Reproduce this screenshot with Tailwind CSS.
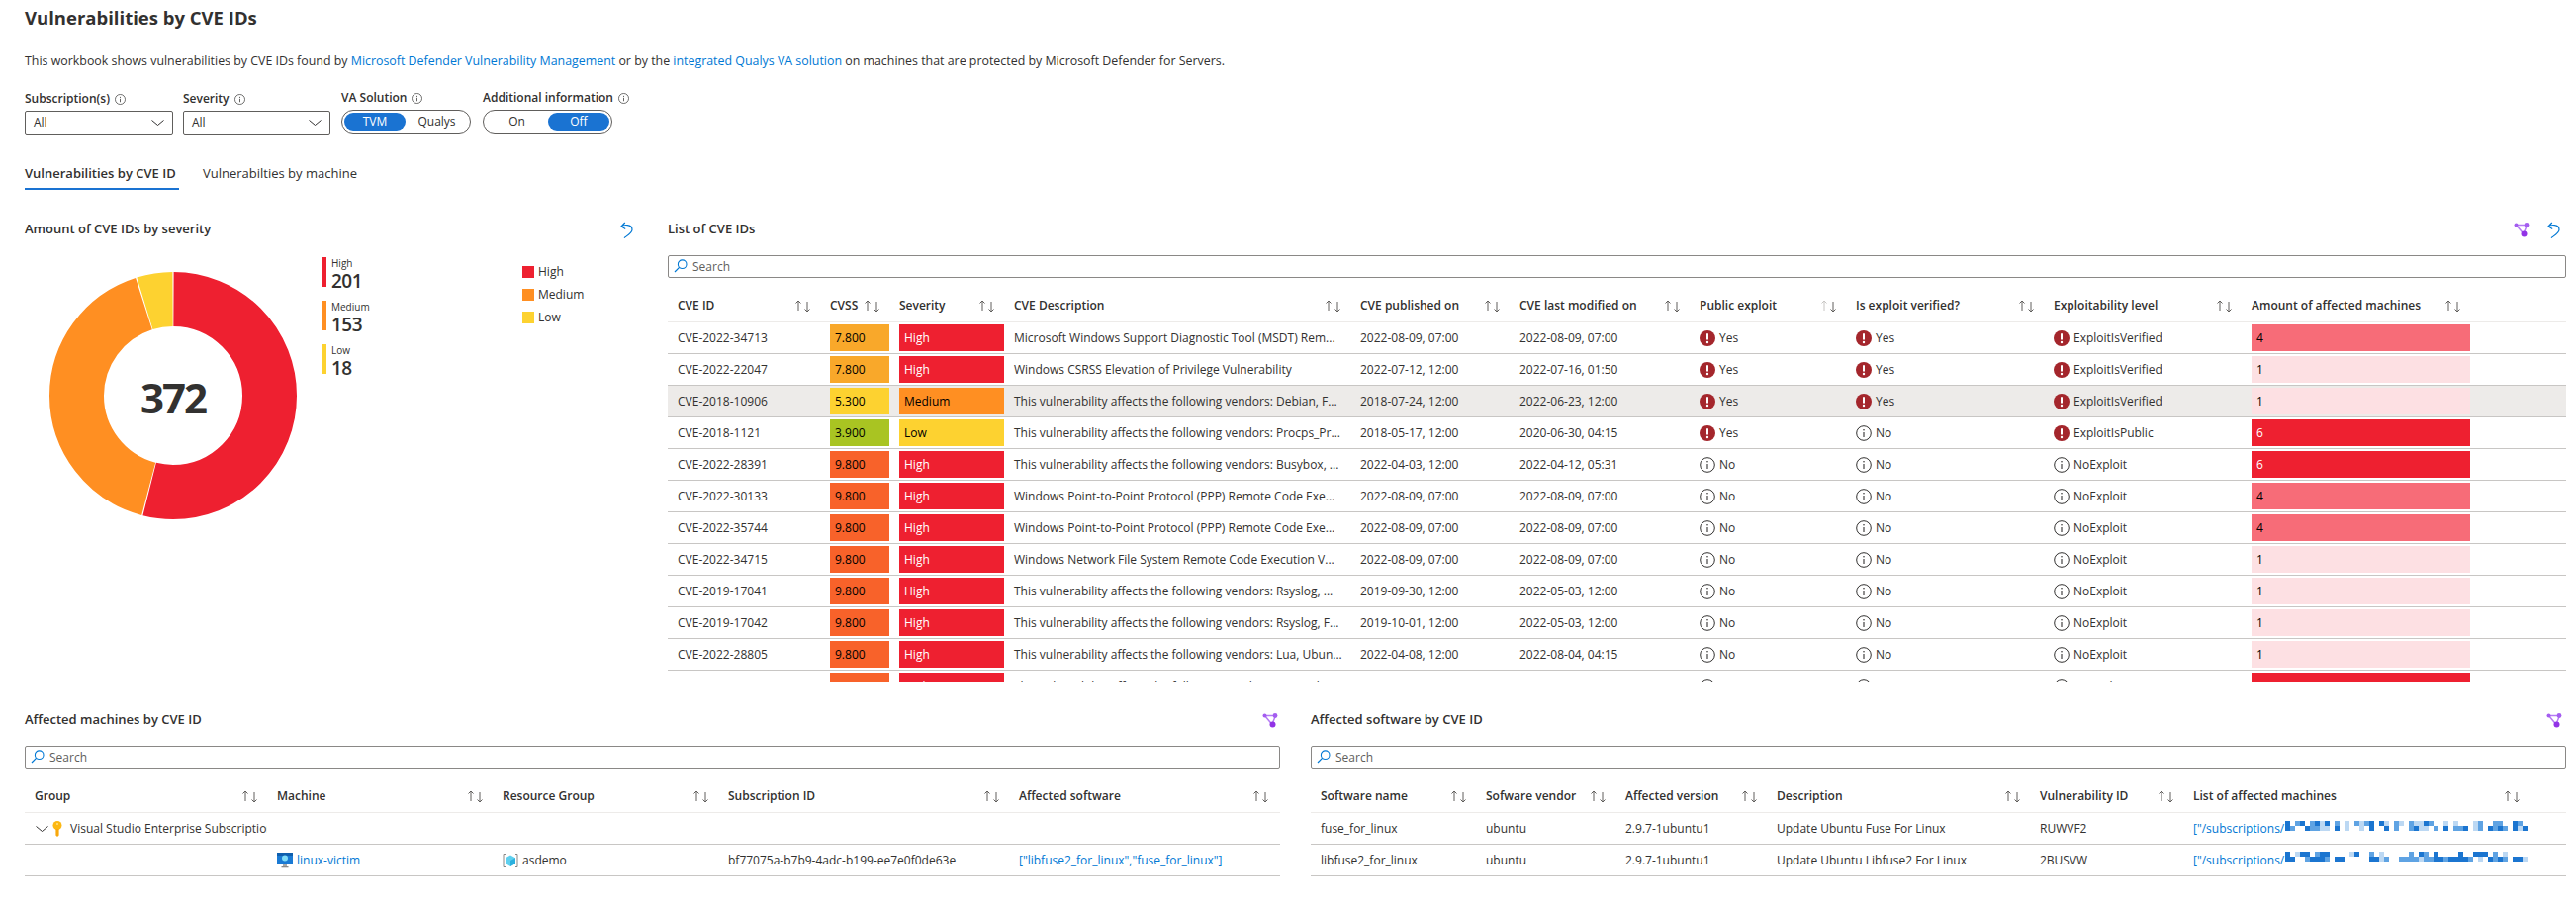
<!DOCTYPE html>
<html><head><meta charset="utf-8"><title>Vulnerabilities by CVE IDs</title>
<script src="https://cdn.jsdelivr.net/npm/@tailwindcss/browser@4"></script></head>
<body class="bg-white">
<svg class="absolute w-0 h-0">
<symbol id="sort" viewBox="0 0 17 14"><path d="M3 12V2M.5 4.500 3 2l2.500 2.500M12 3v10M9.500 10.500 12 13l2.500-2.500" fill="none" stroke="#605e5c" stroke-width="1"/></symbol>
<symbol id="sortd" viewBox="0 0 17 14"><path d="M3 12V2M.5 4.500 3 2l2.500 2.500" fill="none" stroke="#c8c6c4" stroke-width="1"/><path d="M12 3v10M9.500 10.500 12 13l2.500-2.500" fill="none" stroke="#605e5c" stroke-width="1"/></symbol>
<symbol id="info" viewBox="0 0 16 16"><circle cx="8" cy="8" r="7.3" fill="none" stroke="#323130" stroke-width="1"/><path d="M8 7v5" stroke="#323130" stroke-width="1.1"/><circle cx="8" cy="4.8" r=".8" fill="#323130"/></symbol>
<symbol id="err" viewBox="0 0 16 16"><circle cx="8" cy="8" r="8" fill="#a4262c"/><path d="M8 3.2v6.4" stroke="#fff" stroke-width="2"/><circle cx="8" cy="12" r="1.2" fill="#fff"/></symbol>
<symbol id="search" viewBox="0 0 14 14"><circle cx="8.7" cy="5.2" r="4.3" fill="none" stroke="#0078d4" stroke-width="1.1"/><path d="M5.6 8.3 1 13" stroke="#0078d4" stroke-width="1.2"/></symbol>
<symbol id="share" viewBox="0 0 16 16"><path d="M2.5 3.500h11M2.500 3.500l7.500 9M13.500 3.500 10 12" stroke="#b57bf5" stroke-width="1.5" fill="none"/><circle cx="2.5" cy="3.5" r="2" fill="#a45df0"/><circle cx="13" cy="3.5" r="2.4" fill="#a45df0"/><circle cx="10.5" cy="12.5" r="3" fill="#9233e6"/></symbol>
<symbol id="undo" viewBox="0 0 13 17"><path d="M4.800 1 1 5l4.200 2.600M1 5c2-1.800 11-3 11 3.200 0 2.800-3.600 5-8 8.400" fill="none" stroke="#0078d4" stroke-width="1.2"/></symbol>
<symbol id="chev" viewBox="0 0 13 6"><path d="M.5.5l6 5 6-5" fill="none" stroke="#323130" stroke-width="1"/></symbol>
</svg>

<div class="relative w-[2604px] h-[919px] overflow-hidden bg-white text-[#323130] text-[12px] font-['Open_Sans','Noto_Sans',sans-serif] pl-[25px] pr-[10px]">

<h1 class="h-[36px] flex items-center text-[18.5px] font-bold leading-none whitespace-nowrap">Vulnerabilities by CVE IDs</h1>
<p class="mt-[17px] h-[18px] text-[12.4px] leading-[18px] whitespace-nowrap">This workbook shows vulnerabilities by CVE IDs found by <a class="text-[#0078d4]">Microsoft Defender Vulnerability Management</a> or by the <a class="text-[#0078d4]">integrated Qualys VA solution</a> on machines that are protected by Microsoft Defender for Servers.</p>

<div class="mt-[21px] flex h-[44px]">
  <div class="w-[150px] mr-[10px]">
    <div class="h-[16px] mb-[4px] flex items-center gap-[5px] font-semibold"><span>Subscription(s)</span><svg class="w-[11px] h-[11px] shrink-0"><use href="#info"/></svg></div>
    <div class="h-[24px] border border-[#605e5c] rounded-[2px] flex items-center justify-between pl-[8px] pr-[8px]"><span>All</span><svg class="w-[13px] h-[6px]"><use href="#chev"/></svg></div>
  </div>
  <div class="w-[149px] mr-[11px]">
    <div class="h-[16px] mb-[4px] flex items-center gap-[5px] font-semibold"><span>Severity</span><svg class="w-[11px] h-[11px] shrink-0"><use href="#info"/></svg></div>
    <div class="h-[24px] border border-[#605e5c] rounded-[2px] flex items-center justify-between pl-[8px] pr-[8px]"><span>All</span><svg class="w-[13px] h-[6px]"><use href="#chev"/></svg></div>
  </div>
  <div class="w-[131px] mr-[12px]">
    <div class="h-[14px] mb-[5px] flex items-center gap-[5px] font-semibold"><span>VA Solution</span><svg class="w-[11px] h-[11px] shrink-0"><use href="#info"/></svg></div>
    <div class="h-[24px] border border-[#605e5c] rounded-full flex items-center px-[2px] text-center">
      <span class="w-[62px] h-[18px] rounded-full bg-[#1a73d2] text-white leading-[18px]">TVM</span><span class="flex-1">Qualys</span>
    </div>
  </div>
  <div class="w-[131px]">
    <div class="h-[14px] mb-[5px] flex items-center gap-[5px] font-semibold whitespace-nowrap"><span class="shrink-0">Additional information</span><svg class="w-[11px] h-[11px] shrink-0"><use href="#info"/></svg></div>
    <div class="h-[24px] border border-[#605e5c] rounded-full flex items-center px-[2px] text-center">
      <span class="flex-1">On</span><span class="w-[62px] h-[18px] rounded-full bg-[#1a73d2] text-white leading-[18px]">Off</span>
    </div>
  </div>
</div>

<div class="mt-[27px] flex h-[29px] gap-[24px] text-[13px]">
  <div class="font-semibold border-b-2 border-[#1a73d2] w-[156px] h-[29px] leading-[24px] whitespace-nowrap">Vulnerabilities by CVE ID</div>
  <div class="leading-[24px] whitespace-nowrap">Vulnerabilties by machine</div>
</div>

<div class="mt-[30px] flex gap-[35px] h-[468px]">
  <section class="w-[615px] shrink-0">
    <div class="h-[20px] flex items-center justify-between">
      <h2 class="text-[13px] font-semibold">Amount of CVE IDs by severity</h2>
      <svg class="w-[13px] h-[17px]"><use href="#undo"/></svg>
    </div>
    <div class="flex items-start">
      <div class="relative ml-[25px] mt-[33px] w-[250px] h-[250px]">
        <svg class="w-[250px] h-[250px] -rotate-90" viewBox="0 0 250 250">
          <circle cx="125" cy="125" r="97.5" fill="none" stroke="#ee2030" stroke-width="55" pathLength="372" stroke-dasharray="200.4 171.6" stroke-dashoffset="-0.3"/>
          <circle cx="125" cy="125" r="97.5" fill="none" stroke="#ff8f22" stroke-width="55" pathLength="372" stroke-dasharray="152.4 219.6" stroke-dashoffset="-201.3"/>
          <circle cx="125" cy="125" r="97.5" fill="none" stroke="#fdd230" stroke-width="55" pathLength="372" stroke-dasharray="17.4 354.6" stroke-dashoffset="-354.3"/>
        </svg>
        <div class="absolute inset-0 flex items-center justify-center pt-[4px] text-[42px] font-bold leading-none tracking-[-2px]">372</div>
      </div>
      <div class="ml-[25px] mt-[18px] w-[203px] flex flex-col gap-[14px]">
        <div class="flex gap-[5px] h-[30px]"><div class="w-[5px] h-[30px] bg-[#ee2030]"></div><div><div class="text-[10px] leading-[12px]">High</div><div class="mt-[2px] text-[19px] leading-[20px] font-semibold tracking-[-0.5px]">201</div></div></div>
        <div class="flex gap-[5px] h-[30px]"><div class="w-[5px] h-[30px] bg-[#ff8f22]"></div><div><div class="text-[10px] leading-[12px]">Medium</div><div class="mt-[2px] text-[19px] leading-[20px] font-semibold tracking-[-0.5px]">153</div></div></div>
        <div class="flex gap-[5px] h-[30px]"><div class="w-[5px] h-[30px] bg-[#fdd230]"></div><div><div class="text-[10px] leading-[12px]">Low</div><div class="mt-[2px] text-[19px] leading-[20px] font-semibold tracking-[-0.5px]">18</div></div></div>
      </div>
      <div class="mt-[27px] flex flex-col gap-[11px]">
        <div class="flex items-center gap-[4px] h-[12px]"><div class="w-[12px] h-[12px] bg-[#ee2030]"></div><span>High</span></div>
        <div class="flex items-center gap-[4px] h-[12px]"><div class="w-[12px] h-[12px] bg-[#ff8f22]"></div><span>Medium</span></div>
        <div class="flex items-center gap-[4px] h-[12px]"><div class="w-[12px] h-[12px] bg-[#fdd230]"></div><span>Low</span></div>
      </div>
    </div>
  </section>

  <section class="w-[1919px] shrink-0 h-[468px]">
    <div class="h-[20px] flex items-center justify-between pr-[6px]">
      <h2 class="text-[13px] font-semibold">List of CVE IDs</h2>
      <div class="flex items-center gap-[18px]"><svg class="w-[16px] h-[16px]"><use href="#share"/></svg><svg class="w-[13px] h-[17px]"><use href="#undo"/></svg></div>
    </div>
    <div class="mt-[16px] h-[23px] border border-[#8a8886] rounded-[2px] flex items-center gap-[5px] pl-[5px] text-[#605e5c]"><svg class="w-[14px] h-[14px] -mt-[2px]"><use href="#search"/></svg><span>Search</span></div>
    <div class="mt-[11px] h-[398px] overflow-hidden">
    <table class="w-full table-fixed border-separate border-spacing-0 whitespace-nowrap [&_th]:h-[34px] [&_th]:p-0 [&_th]:font-semibold [&_th]:text-left [&_th]:border-b [&_th]:border-[#edebe9] [&_td]:h-[32px] [&_td]:p-0 [&_td]:pl-[10px] [&_td]:border-b [&_td]:border-[#c8c6c4] [&_td]:overflow-hidden">
      <colgroup><col class="w-[154px]"><col class="w-[70px]"><col class="w-[116px]"><col class="w-[350px]"><col class="w-[161px]"><col class="w-[182px]"><col class="w-[158px]"><col class="w-[200px]"><col class="w-[200px]"><col class="w-[328px]"></colgroup>
      <thead><tr>
        <th><div class="flex items-center justify-between pl-[10px] pr-[8px]"><span>CVE ID</span><svg class="w-[17px] h-[14px]"><use href="#sort"/></svg></div></th>
        <th><div class="flex items-center justify-between pl-[10px] pr-[8px]"><span>CVSS</span><svg class="w-[17px] h-[14px]"><use href="#sort"/></svg></div></th>
        <th><div class="flex items-center justify-between pl-[10px] pr-[8px]"><span>Severity</span><svg class="w-[17px] h-[14px]"><use href="#sort"/></svg></div></th>
        <th><div class="flex items-center justify-between pl-[10px] pr-[8px]"><span>CVE Description</span><svg class="w-[17px] h-[14px]"><use href="#sort"/></svg></div></th>
        <th><div class="flex items-center justify-between pl-[10px] pr-[8px]"><span>CVE published on</span><svg class="w-[17px] h-[14px]"><use href="#sort"/></svg></div></th>
        <th><div class="flex items-center justify-between pl-[10px] pr-[8px]"><span>CVE last modified on</span><svg class="w-[17px] h-[14px]"><use href="#sort"/></svg></div></th>
        <th><div class="flex items-center justify-between pl-[10px] pr-[8px]"><span>Public exploit</span><svg class="w-[17px] h-[14px]"><use href="#sortd"/></svg></div></th>
        <th><div class="flex items-center justify-between pl-[10px] pr-[8px]"><span>Is exploit verified?</span><svg class="w-[17px] h-[14px]"><use href="#sort"/></svg></div></th>
        <th><div class="flex items-center justify-between pl-[10px] pr-[8px]"><span>Exploitability level</span><svg class="w-[17px] h-[14px]"><use href="#sort"/></svg></div></th>
        <th><div class="flex items-center justify-between pl-[10px] pr-[105px]"><span>Amount of affected machines</span><svg class="w-[17px] h-[14px]"><use href="#sort"/></svg></div></th>
      </tr></thead>
      <tbody>
        <tr><td>CVE-2022-34713</td><td><div class="h-[27px] leading-[27px] px-[5px] bg-[#f9a82a] text-black">7.800</div></td><td><div class="h-[27px] leading-[27px] px-[5px] bg-[#ee2030] text-white">High</div></td><td>Microsoft Windows Support Diagnostic Tool (MSDT) Rem...</td><td>2022-08-09, 07:00</td><td>2022-08-09, 07:00</td>
          <td><div class="flex items-center gap-[4px]"><svg class="w-[16px] h-[16px]"><use href="#err"/></svg>Yes</div></td><td><div class="flex items-center gap-[4px]"><svg class="w-[16px] h-[16px]"><use href="#err"/></svg>Yes</div></td><td><div class="flex items-center gap-[4px]"><svg class="w-[16px] h-[16px]"><use href="#err"/></svg>ExploitIsVerified</div></td><td><div class="w-[221px] h-[27px] leading-[27px] px-[5px] bg-[#f76c78] text-black">4</div></td></tr>
        <tr><td>CVE-2022-22047</td><td><div class="h-[27px] leading-[27px] px-[5px] bg-[#f9a82a] text-black">7.800</div></td><td><div class="h-[27px] leading-[27px] px-[5px] bg-[#ee2030] text-white">High</div></td><td>Windows CSRSS Elevation of Privilege Vulnerability</td><td>2022-07-12, 12:00</td><td>2022-07-16, 01:50</td>
          <td><div class="flex items-center gap-[4px]"><svg class="w-[16px] h-[16px]"><use href="#err"/></svg>Yes</div></td><td><div class="flex items-center gap-[4px]"><svg class="w-[16px] h-[16px]"><use href="#err"/></svg>Yes</div></td><td><div class="flex items-center gap-[4px]"><svg class="w-[16px] h-[16px]"><use href="#err"/></svg>ExploitIsVerified</div></td><td><div class="w-[221px] h-[27px] leading-[27px] px-[5px] bg-[#fde0e3] text-black">1</div></td></tr>
        <tr class="bg-[#edebe9]"><td>CVE-2018-10906</td><td><div class="h-[27px] leading-[27px] px-[5px] bg-[#fdd230] text-black">5.300</div></td><td><div class="h-[27px] leading-[27px] px-[5px] bg-[#ff8f22] text-black">Medium</div></td><td>This vulnerability affects the following vendors: Debian, F...</td><td>2018-07-24, 12:00</td><td>2022-06-23, 12:00</td>
          <td><div class="flex items-center gap-[4px]"><svg class="w-[16px] h-[16px]"><use href="#err"/></svg>Yes</div></td><td><div class="flex items-center gap-[4px]"><svg class="w-[16px] h-[16px]"><use href="#err"/></svg>Yes</div></td><td><div class="flex items-center gap-[4px]"><svg class="w-[16px] h-[16px]"><use href="#err"/></svg>ExploitIsVerified</div></td><td><div class="w-[221px] h-[27px] leading-[27px] px-[5px] bg-[#fde0e3] text-black">1</div></td></tr>
        <tr><td>CVE-2018-1121</td><td><div class="h-[27px] leading-[27px] px-[5px] bg-[#a9c422] text-black">3.900</div></td><td><div class="h-[27px] leading-[27px] px-[5px] bg-[#fdd230] text-black">Low</div></td><td>This vulnerability affects the following vendors: Procps_Pr...</td><td>2018-05-17, 12:00</td><td>2020-06-30, 04:15</td>
          <td><div class="flex items-center gap-[4px]"><svg class="w-[16px] h-[16px]"><use href="#err"/></svg>Yes</div></td><td><div class="flex items-center gap-[4px]"><svg class="w-[16px] h-[16px]"><use href="#info"/></svg>No</div></td><td><div class="flex items-center gap-[4px]"><svg class="w-[16px] h-[16px]"><use href="#err"/></svg>ExploitIsPublic</div></td><td><div class="w-[221px] h-[27px] leading-[27px] px-[5px] bg-[#ee2030] text-white">6</div></td></tr>
        <tr><td>CVE-2022-28391</td><td><div class="h-[27px] leading-[27px] px-[5px] bg-[#f8622a] text-black">9.800</div></td><td><div class="h-[27px] leading-[27px] px-[5px] bg-[#ee2030] text-white">High</div></td><td>This vulnerability affects the following vendors: Busybox, ...</td><td>2022-04-03, 12:00</td><td>2022-04-12, 05:31</td>
          <td><div class="flex items-center gap-[4px]"><svg class="w-[16px] h-[16px]"><use href="#info"/></svg>No</div></td><td><div class="flex items-center gap-[4px]"><svg class="w-[16px] h-[16px]"><use href="#info"/></svg>No</div></td><td><div class="flex items-center gap-[4px]"><svg class="w-[16px] h-[16px]"><use href="#info"/></svg>NoExploit</div></td><td><div class="w-[221px] h-[27px] leading-[27px] px-[5px] bg-[#ee2030] text-white">6</div></td></tr>
        <tr><td>CVE-2022-30133</td><td><div class="h-[27px] leading-[27px] px-[5px] bg-[#f8622a] text-black">9.800</div></td><td><div class="h-[27px] leading-[27px] px-[5px] bg-[#ee2030] text-white">High</div></td><td>Windows Point-to-Point Protocol (PPP) Remote Code Exe...</td><td>2022-08-09, 07:00</td><td>2022-08-09, 07:00</td>
          <td><div class="flex items-center gap-[4px]"><svg class="w-[16px] h-[16px]"><use href="#info"/></svg>No</div></td><td><div class="flex items-center gap-[4px]"><svg class="w-[16px] h-[16px]"><use href="#info"/></svg>No</div></td><td><div class="flex items-center gap-[4px]"><svg class="w-[16px] h-[16px]"><use href="#info"/></svg>NoExploit</div></td><td><div class="w-[221px] h-[27px] leading-[27px] px-[5px] bg-[#f76c78] text-black">4</div></td></tr>
        <tr><td>CVE-2022-35744</td><td><div class="h-[27px] leading-[27px] px-[5px] bg-[#f8622a] text-black">9.800</div></td><td><div class="h-[27px] leading-[27px] px-[5px] bg-[#ee2030] text-white">High</div></td><td>Windows Point-to-Point Protocol (PPP) Remote Code Exe...</td><td>2022-08-09, 07:00</td><td>2022-08-09, 07:00</td>
          <td><div class="flex items-center gap-[4px]"><svg class="w-[16px] h-[16px]"><use href="#info"/></svg>No</div></td><td><div class="flex items-center gap-[4px]"><svg class="w-[16px] h-[16px]"><use href="#info"/></svg>No</div></td><td><div class="flex items-center gap-[4px]"><svg class="w-[16px] h-[16px]"><use href="#info"/></svg>NoExploit</div></td><td><div class="w-[221px] h-[27px] leading-[27px] px-[5px] bg-[#f76c78] text-black">4</div></td></tr>
        <tr><td>CVE-2022-34715</td><td><div class="h-[27px] leading-[27px] px-[5px] bg-[#f8622a] text-black">9.800</div></td><td><div class="h-[27px] leading-[27px] px-[5px] bg-[#ee2030] text-white">High</div></td><td>Windows Network File System Remote Code Execution V...</td><td>2022-08-09, 07:00</td><td>2022-08-09, 07:00</td>
          <td><div class="flex items-center gap-[4px]"><svg class="w-[16px] h-[16px]"><use href="#info"/></svg>No</div></td><td><div class="flex items-center gap-[4px]"><svg class="w-[16px] h-[16px]"><use href="#info"/></svg>No</div></td><td><div class="flex items-center gap-[4px]"><svg class="w-[16px] h-[16px]"><use href="#info"/></svg>NoExploit</div></td><td><div class="w-[221px] h-[27px] leading-[27px] px-[5px] bg-[#fde0e3] text-black">1</div></td></tr>
        <tr><td>CVE-2019-17041</td><td><div class="h-[27px] leading-[27px] px-[5px] bg-[#f8622a] text-black">9.800</div></td><td><div class="h-[27px] leading-[27px] px-[5px] bg-[#ee2030] text-white">High</div></td><td>This vulnerability affects the following vendors: Rsyslog, ...</td><td>2019-09-30, 12:00</td><td>2022-05-03, 12:00</td>
          <td><div class="flex items-center gap-[4px]"><svg class="w-[16px] h-[16px]"><use href="#info"/></svg>No</div></td><td><div class="flex items-center gap-[4px]"><svg class="w-[16px] h-[16px]"><use href="#info"/></svg>No</div></td><td><div class="flex items-center gap-[4px]"><svg class="w-[16px] h-[16px]"><use href="#info"/></svg>NoExploit</div></td><td><div class="w-[221px] h-[27px] leading-[27px] px-[5px] bg-[#fde0e3] text-black">1</div></td></tr>
        <tr><td>CVE-2019-17042</td><td><div class="h-[27px] leading-[27px] px-[5px] bg-[#f8622a] text-black">9.800</div></td><td><div class="h-[27px] leading-[27px] px-[5px] bg-[#ee2030] text-white">High</div></td><td>This vulnerability affects the following vendors: Rsyslog, F...</td><td>2019-10-01, 12:00</td><td>2022-05-03, 12:00</td>
          <td><div class="flex items-center gap-[4px]"><svg class="w-[16px] h-[16px]"><use href="#info"/></svg>No</div></td><td><div class="flex items-center gap-[4px]"><svg class="w-[16px] h-[16px]"><use href="#info"/></svg>No</div></td><td><div class="flex items-center gap-[4px]"><svg class="w-[16px] h-[16px]"><use href="#info"/></svg>NoExploit</div></td><td><div class="w-[221px] h-[27px] leading-[27px] px-[5px] bg-[#fde0e3] text-black">1</div></td></tr>
        <tr><td>CVE-2022-28805</td><td><div class="h-[27px] leading-[27px] px-[5px] bg-[#f8622a] text-black">9.800</div></td><td><div class="h-[27px] leading-[27px] px-[5px] bg-[#ee2030] text-white">High</div></td><td>This vulnerability affects the following vendors: Lua, Ubun...</td><td>2022-04-08, 12:00</td><td>2022-08-04, 04:15</td>
          <td><div class="flex items-center gap-[4px]"><svg class="w-[16px] h-[16px]"><use href="#info"/></svg>No</div></td><td><div class="flex items-center gap-[4px]"><svg class="w-[16px] h-[16px]"><use href="#info"/></svg>No</div></td><td><div class="flex items-center gap-[4px]"><svg class="w-[16px] h-[16px]"><use href="#info"/></svg>NoExploit</div></td><td><div class="w-[221px] h-[27px] leading-[27px] px-[5px] bg-[#fde0e3] text-black">1</div></td></tr>
        <tr><td>CVE-2019-14866</td><td><div class="h-[27px] leading-[27px] px-[5px] bg-[#f8622a] text-black">9.800</div></td><td><div class="h-[27px] leading-[27px] px-[5px] bg-[#ee2030] text-white">High</div></td><td>This vulnerability affects the following vendors: Rpm, Ubun...</td><td>2019-11-06, 12:00</td><td>2022-05-03, 12:00</td>
          <td><div class="flex items-center gap-[4px]"><svg class="w-[16px] h-[16px]"><use href="#info"/></svg>No</div></td><td><div class="flex items-center gap-[4px]"><svg class="w-[16px] h-[16px]"><use href="#info"/></svg>No</div></td><td><div class="flex items-center gap-[4px]"><svg class="w-[16px] h-[16px]"><use href="#info"/></svg>NoExploit</div></td><td><div class="w-[221px] h-[27px] leading-[27px] px-[5px] bg-[#ee2030] text-white">6</div></td></tr>
      </tbody>
    </table>
    </div>
  </section>
</div>

<div class="mt-[28px] flex gap-[31px]">
  <section class="w-[1269px] shrink-0">
    <div class="h-[20px] flex items-center justify-between pr-[2px]">
      <h2 class="text-[13px] font-semibold">Affected machines by CVE ID</h2>
      <svg class="w-[16px] h-[16px]"><use href="#share"/></svg>
    </div>
    <div class="mt-[16px] h-[23px] border border-[#8a8886] rounded-[2px] flex items-center gap-[5px] pl-[5px] text-[#605e5c]"><svg class="w-[14px] h-[14px] -mt-[2px]"><use href="#search"/></svg><span>Search</span></div>
    <table class="mt-[11px] w-full table-fixed border-separate border-spacing-0 whitespace-nowrap [&_th]:h-[34px] [&_th]:p-0 [&_th]:font-semibold [&_th]:text-left [&_th]:border-b [&_th]:border-[#edebe9] [&_td]:h-[32px] [&_td]:p-0 [&_td]:pl-[10px] [&_td]:border-b [&_td]:border-[#c8c6c4] [&_td]:overflow-hidden">
      <colgroup><col class="w-[245px]"><col class="w-[228px]"><col class="w-[228px]"><col class="w-[294px]"><col class="w-[274px]"></colgroup>
      <thead><tr>
        <th><div class="flex items-center justify-between pl-[10px] pr-[8px]"><span>Group</span><svg class="w-[17px] h-[14px]"><use href="#sort"/></svg></div></th>
        <th><div class="flex items-center justify-between pl-[10px] pr-[8px]"><span>Machine</span><svg class="w-[17px] h-[14px]"><use href="#sort"/></svg></div></th>
        <th><div class="flex items-center justify-between pl-[10px] pr-[8px]"><span>Resource Group</span><svg class="w-[17px] h-[14px]"><use href="#sort"/></svg></div></th>
        <th><div class="flex items-center justify-between pl-[10px] pr-[8px]"><span>Subscription ID</span><svg class="w-[17px] h-[14px]"><use href="#sort"/></svg></div></th>
        <th><div class="flex items-center justify-between pl-[10px] pr-[10px]"><span>Affected software</span><svg class="w-[17px] h-[14px]"><use href="#sort"/></svg></div></th>
      </tr></thead>
      <tbody>
        <tr><td><div class="flex items-center pl-[1px]"><svg class="w-[13px] h-[6px] shrink-0" ><use href="#chev"/></svg>
          <svg class="ml-[4px] w-[10px] h-[16px] shrink-0" viewBox="0 0 10 16"><circle cx="5" cy="4.5" r="4.5" fill="#fcb813"/><path d="M3.4 8h3.2v6.4L5 16l-1.6-1.6z" fill="#f8a80c"/><circle cx="5" cy="3" r="1" fill="#ffe18a"/></svg>
          <span class="ml-[8px]">Visual Studio Enterprise Subscription</span></div></td><td></td><td></td><td></td><td></td></tr>
        <tr><td></td>
          <td><div class="flex items-center gap-[4px]"><svg class="w-[16px] h-[16px] shrink-0" viewBox="0 0 16 16"><rect y="0" width="16" height="11" fill="#1a7ad4"/><rect y="0" width="16" height="3" fill="#0f5fae"/><circle cx="8" cy="5.5" r="3" fill="#7fdcf7"/><rect x="6" y="11" width="4" height="3" fill="#a8a8a8"/><rect x="4.5" y="14" width="7" height="1.3" fill="#8a8a8a"/></svg><a class="text-[#0078d4]">linux-victim</a></div></td>
          <td><div class="flex items-center gap-[4px]"><svg class="w-[16px] h-[16px] shrink-0" viewBox="0 0 16 16"><path d="M3 1.500H1v13h2M13 1.500h2v13h-2" fill="none" stroke="#8a8886" stroke-width="1"/><path d="M8 2.500l5 2.700v5.800L8 14 3 11V5.200z" fill="#5ed0ef"/><path d="M8 8v6l5-3V5.200z" fill="#2bb0de"/></svg><span>asdemo</span></div></td>
          <td>bf77075a-b7b9-4adc-b199-ee7e0f0de63e</td>
          <td><a class="text-[#0078d4]">["libfuse2_for_linux","fuse_for_linux"]</a></td></tr>
      </tbody>
    </table>
  </section>

  <section class="w-[1269px] shrink-0">
    <div class="h-[20px] flex items-center justify-between pr-[4px]">
      <h2 class="text-[13px] font-semibold">Affected software by CVE ID</h2>
      <svg class="w-[16px] h-[16px]"><use href="#share"/></svg>
    </div>
    <div class="mt-[16px] h-[23px] border border-[#8a8886] rounded-[2px] flex items-center gap-[5px] pl-[5px] text-[#605e5c]"><svg class="w-[14px] h-[14px] -mt-[2px]"><use href="#search"/></svg><span>Search</span></div>
    <table class="mt-[11px] w-full table-fixed border-separate border-spacing-0 whitespace-nowrap [&_th]:h-[34px] [&_th]:p-0 [&_th]:font-semibold [&_th]:text-left [&_th]:border-b [&_th]:border-[#edebe9] [&_td]:h-[32px] [&_td]:p-0 [&_td]:pl-[10px] [&_td]:border-b [&_td]:border-[#c8c6c4]">
      <colgroup><col class="w-[167px]"><col class="w-[141px]"><col class="w-[153px]"><col class="w-[266px]"><col class="w-[155px]"><col class="w-[387px]"></colgroup>
      <thead><tr>
        <th><div class="flex items-center justify-between pl-[10px] pr-[8px]"><span>Software name</span><svg class="w-[17px] h-[14px]"><use href="#sort"/></svg></div></th>
        <th><div class="flex items-center justify-between pl-[10px] pr-[8px]"><span>Sofware vendor</span><svg class="w-[17px] h-[14px]"><use href="#sort"/></svg></div></th>
        <th><div class="flex items-center justify-between pl-[10px] pr-[8px]"><span>Affected version</span><svg class="w-[17px] h-[14px]"><use href="#sort"/></svg></div></th>
        <th><div class="flex items-center justify-between pl-[10px] pr-[8px]"><span>Description</span><svg class="w-[17px] h-[14px]"><use href="#sort"/></svg></div></th>
        <th><div class="flex items-center justify-between pl-[10px] pr-[8px]"><span>Vulnerability ID</span><svg class="w-[17px] h-[14px]"><use href="#sort"/></svg></div></th>
        <th><div class="flex items-center justify-between pl-[10px] pr-[45px]"><span>List of affected machines</span><svg class="w-[17px] h-[14px]"><use href="#sort"/></svg></div></th>
      </tr></thead>
      <tbody>
        <tr><td>fuse_for_linux</td><td>ubuntu</td><td>2.9.7-1ubuntu1</td><td>Update Ubuntu Fuse For Linux</td><td>RUWVF2</td>
          <td><div class="relative flex items-center h-[31px]"><a class="text-[#0078d4]">["/subscriptions/</a>
            <svg class="absolute left-[93px] top-[8px] bg-white" width="250" height="10" viewBox="0 0 250 10" shape-rendering="crispEdges">
              <path fill="#1b75d0" d="M0 0h5v5H0zM15 0h5v5h-5zM30 0h5v5h-5zM40 0h5v5h-5zM85 0h5v5h-5zM95 0h5v5h-5zM140 0h5v5h-5zM230 0h5v5h-5zM0 5h5v5H0zM20 5h5v5h-5zM50 5h5v5h-5zM85 5h5v5h-5zM100 5h5v5h-5zM130 5h5v5h-5zM160 5h5v5h-5zM180 5h5v5h-5zM205 5h5v5h-5zM215 5h5v5h-5zM230 5h5v5h-5zM240 5h5v5h-5z"/>
              <path fill="#5fa3e3" d="M10 0h5v5h-5zM25 0h5v5h-5zM50 0h5v5h-5zM70 0h5v5h-5zM80 0h5v5h-5zM110 0h5v5h-5zM125 0h5v5h-5zM145 0h5v5h-5zM195 0h5v5h-5zM210 0h10v5h-10zM235 0h5v5h-5zM5 5h5v5H5zM25 5h10v5H25zM110 5h5v5h-5zM125 5h5v5h-5zM150 5h5v5h-5zM170 5h10v5h-10zM195 5h5v5h-5zM210 5h5v5h-5zM220 5h5v5h-5z"/>
              <path fill="#bcd8f3" d="M35 0h5v5h-5zM60 0h5v5h-5zM75 0h5v5h-5zM100 0h5v5h-5zM115 0h5v5h-5zM130 0h10v5h-10zM160 0h5v5h-5zM170 0h5v5h-5zM190 0h5v5h-5zM35 5h10v5H35zM60 5h5v5h-5zM75 5h5v5h-5zM135 5h10v5h-10zM190 5h5v5h-5zM235 5h5v5h-5z"/>
            </svg>
            <div class="absolute left-[92px] top-[30px] w-[258px] h-[1px] bg-white"></div>
          </div></td></tr>
        <tr><td>libfuse2_for_linux</td><td>ubuntu</td><td>2.9.7-1ubuntu1</td><td>Update Ubuntu Libfuse2 For Linux</td><td>2BUSVW</td>
          <td><div class="relative flex items-center h-[31px]"><a class="text-[#0078d4]">["/subscriptions/</a>
            <svg class="absolute left-[93px] top-[7px] bg-white" width="250" height="10" viewBox="0 0 250 10" shape-rendering="crispEdges">
              <path fill="#1b75d0" d="M0 0h5v5H0zM15 0h10v5H15zM35 0h10v5H35zM70 0h5v5h-5zM135 0h5v5h-5zM150 0h5v5h-5zM175 0h5v5h-5zM190 0h15v5h-15zM0 5h10v5H0zM25 5h15v5H25zM50 5h10v5H50zM85 5h10v5H85zM150 5h10v5h-10zM165 5h20v5h-20zM205 5h5v5h-5zM215 5h5v5h-5zM230 5h10v5h-10z"/>
              <path fill="#5fa3e3" d="M30 0h5v5h-5zM85 0h5v5h-5zM125 0h5v5h-5zM140 0h5v5h-5zM210 0h5v5h-5zM20 5h5v5h-5zM40 5h5v5h-5zM100 5h5v5h-5zM115 5h20v5h-20zM140 5h10v5h-10zM160 5h5v5h-5zM185 5h5v5h-5zM210 5h5v5h-5zM220 5h5v5h-5z"/>
              <path fill="#bcd8f3" d="M10 0h5v5h-5zM65 0h5v5h-5zM95 0h5v5h-5zM220 0h5v5h-5zM95 5h5v5h-5zM135 5h5v5h-5zM195 5h5v5h-5zM240 5h5v5h-5z"/>
            </svg>
          </div></td></tr>
      </tbody>
    </table>
  </section>
</div>

</div>
</body></html>
